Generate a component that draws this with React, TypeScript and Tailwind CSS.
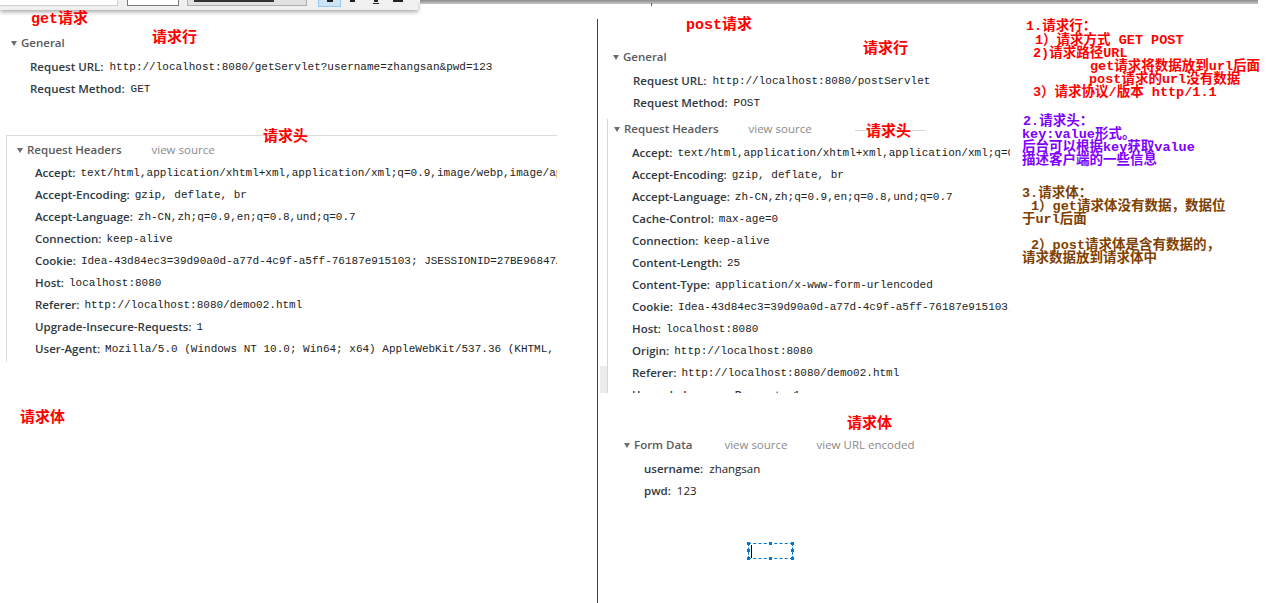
import React from 'react';

const sans = "font-['Open_Sans','Noto_Sans',sans-serif]";
const mono = "font-['Liberation_Mono','DejaVu_Sans_Mono',monospace]";
const cjk = "font-['Liberation_Mono','Noto_Sans_CJK_SC',monospace]";

function Caret() {
  return (
    <svg width="6" height="5" viewBox="0 0 6 5" className="shrink-0">
      <polygon points="0,0 6,0 3,5" fill="#6e6e6e" />
    </svg>
  );
}

function Header({ title, pl, links = [] }: { title: string; pl: string; links?: { text: string; ml: string }[] }) {
  return (
    <div className={`h-[20px] flex items-center gap-[4px] whitespace-nowrap ${pl}`}>
      <Caret />
      <span className="text-[11.5px] font-semibold text-[#5a5a5a]">{title}</span>
      {links.map((l) => (
        <span key={l.text} className={`text-[11.5px] text-[#8a8a8a] ${l.ml}`}>{l.text}</span>
      ))}
    </div>
  );
}

function Row({ k, v, gap = 'ml-[5px]', plain = false }: { k: string; v: string; gap?: string; plain?: boolean }) {
  return (
    <div className="h-[22px] flex items-center whitespace-nowrap">
      <span className="text-[11.5px] font-semibold text-[#303942]">{k}:</span>
      <span className={`${gap} ${plain ? 'text-[11.5px]' : `${mono} text-[11px]`} text-[#222]`}>{v}</span>
    </div>
  );
}

const leftHeaders: [string, string][] = [
  ['Accept', 'text/html,application/xhtml+xml,application/xml;q=0.9,image/webp,image/apng,*/*;q=0.8'],
  ['Accept-Encoding', 'gzip, deflate, br'],
  ['Accept-Language', 'zh-CN,zh;q=0.9,en;q=0.8,und;q=0.7'],
  ['Connection', 'keep-alive'],
  ['Cookie', 'Idea-43d84ec3=39d90a0d-a77d-4c9f-a5ff-76187e915103; JSESSIONID=27BE96847A1C'],
  ['Host', 'localhost:8080'],
  ['Referer', 'http://localhost:8080/demo02.html'],
  ['Upgrade-Insecure-Requests', '1'],
  ['User-Agent', 'Mozilla/5.0 (Windows NT 10.0; Win64; x64) AppleWebKit/537.36 (KHTML, like Gecko)'],
];

const rightHeaders: [string, string][] = [
  ['Accept', 'text/html,application/xhtml+xml,application/xml;q=0.9,image/webp'],
  ['Accept-Encoding', 'gzip, deflate, br'],
  ['Accept-Language', 'zh-CN,zh;q=0.9,en;q=0.8,und;q=0.7'],
  ['Cache-Control', 'max-age=0'],
  ['Connection', 'keep-alive'],
  ['Content-Length', '25'],
  ['Content-Type', 'application/x-www-form-urlencoded'],
  ['Cookie', 'Idea-43d84ec3=39d90a0d-a77d-4c9f-a5ff-76187e915103; JSESSIONID'],
  ['Host', 'localhost:8080'],
  ['Origin', 'http://localhost:8080'],
  ['Referer', 'http://localhost:8080/demo02.html'],
  ['Upgrade-Insecure-Requests', '1'],
];

function Note({ text, cls }: { text: string; cls: string }) {
  return (
    <div className={`absolute ${cjk} font-bold text-[15px] leading-[16px] text-[#ff0000] whitespace-nowrap ${cls}`}>{text}</div>
  );
}

function Line({ text, cls = '', h }: { text: string; cls?: string; h: string }) {
  return <div className={`${h} flex items-center whitespace-pre ${cls}`}>{text}</div>;
}

function Handle({ cls }: { cls: string }) {
  return <div className={`absolute w-[3px] h-[3px] bg-[#0078d7] ${cls}`} />;
}

export default function App() {
  return (
    <div className={`relative w-[1267px] h-[603px] bg-white overflow-hidden flex ${sans}`}>
      {/* left: GET request */}
      <div className="w-[597px] shrink-0 pt-[33px]">
        <Header title="General" pl="pl-[11px]" />
        <div className="pl-[30px] mt-[3px]">
          <Row k="Request URL" v="http://localhost:8080/getServlet?username=zhangsan&pwd=123" gap="ml-[6px]" />
          <Row k="Request Method" v="GET" gap="ml-[6px]" />
        </div>
        <div className="mt-[35px] ml-[6px] w-[551px] h-[227px] border-t border-l border-[#dcdcdc] overflow-hidden">
          <div className="pt-[4px]">
            <Header title="Request Headers" pl="pl-[10px]" links={[{ text: 'view source', ml: 'ml-[26px]' }]} />
          </div>
          <div className="pl-[28px] mt-[2px]">
            {leftHeaders.map(([k, v]) => (
              <Row key={k} k={k} v={v} />
            ))}
          </div>
        </div>
      </div>

      <div className="w-px shrink-0 mt-[19px] bg-[#d40000]" />

      {/* right: POST request */}
      <div className="w-[412px] shrink-0 pt-[47px] overflow-hidden">
        <Header title="General" pl="pl-[15px]" />
        <div className="pl-[35px] mt-[3px]">
          <Row k="Request URL" v="http://localhost:8080/postServlet" gap="ml-[6px]" />
          <Row k="Request Method" v="POST" gap="ml-[6px]" />
        </div>
        <div className="mt-[5px] ml-[2px] flex h-[274px]">
          <div className="w-[7px] flex flex-col justify-end">
            <div className="h-[27px] bg-[#ececec]" />
          </div>
          <div className="flex-1 border-l border-[#d6d6d6] overflow-hidden">
            <Header title="Request Headers" pl="pl-[6px]" links={[{ text: 'view source', ml: 'ml-[26px]' }]} />
            <div className="pl-[24px] mt-[3px]">
              {rightHeaders.map(([k, v]) => (
                <Row key={k} k={k} v={v} />
              ))}
            </div>
          </div>
        </div>
        <div className="mt-[42px]">
          <Header
            title="Form Data"
            pl="pl-[26px]"
            links={[
              { text: 'view source', ml: 'ml-[28px]' },
              { text: 'view URL encoded', ml: 'ml-[25px]' },
            ]}
          />
          <div className="pl-[46px] mt-[3px]">
            <Row k="username" v="zhangsan" gap="ml-[6px]" plain />
            <Row k="pwd" v="123" gap="ml-[6px]" plain />
          </div>
        </div>
      </div>

      {/* top strip of another window */}
      <div className="absolute left-[420px] top-0 w-[838px] h-[4px] bg-gradient-to-b from-[#8c8c8c] to-[#c8c8c8]" />
      <div className="absolute left-0 top-0 w-[418px] h-[10px] bg-[#f0f0f0] shadow-[0_2px_4px_rgba(0,0,0,0.35)] flex items-start">
        <div className="w-[118px] h-[6px] bg-white border-r border-b border-[#d0d0d0]" />
        <div className="ml-[9px] w-[52px] h-[6px] bg-white border border-t-0 border-[#7a7a7a]" />
        <div className="ml-[8px] w-[120px] h-[6px] bg-[#e1e1e1] border border-t-0 border-[#adadad] pl-[6px]">
          <div className="w-[80px] h-[2px] bg-[#333]" />
        </div>
        <div className="ml-[11px] w-[23px] h-[7px] bg-[#cce4f7] border border-t-0 border-[#99c9ef] flex justify-center">
          <div className="w-[6px] h-[2px] bg-[#222]" />
        </div>
        <div className="ml-[9px] w-[5px] h-[2px] bg-[#222]" />
        <div className="ml-[18px] w-[6px] h-[4px] border-b border-[#222] flex justify-center"><div className="w-[4px] h-[2px] bg-[#222]" /></div>
        <div className="ml-[14px] w-[10px] h-[2px] bg-[#222]" />
      </div>
      <div className="absolute left-[651px] top-[3px] w-px h-[3px] bg-[#1a6fd0]" />

      {/* red annotations */}
      <Note text="get请求" cls="left-[31px] top-[12px]" />
      <Note text="请求行" cls="left-[152px] top-[31px]" />
      <Note text="请求头" cls="left-[263px] top-[130px]" />
      <Note text="请求体" cls="left-[20px] top-[411px]" />
      <Note text="post请求" cls="left-[686px] top-[18px]" />
      <Note text="请求行" cls="left-[863px] top-[42px]" />
      <div className="absolute left-[855px] top-[130px] w-[70px] h-px bg-[#d6d6d6]" />
      <Note text="请求头" cls="left-[866px] top-[125px]" />
      <Note text="请求体" cls="left-[847px] top-[417px]" />

      {/* selection box */}
      <div className="absolute left-[748px] top-[543px] w-[45px] h-[16px] border border-dashed border-[#0078d7]">
        <div className="absolute left-[2px] top-[1px] w-px h-[13px] bg-black" />
        <Handle cls="-left-[2px] -top-[2px]" />
        <Handle cls="left-[20px] -top-[2px]" />
        <Handle cls="-right-[2px] -top-[2px]" />
        <Handle cls="-left-[2px] top-[5px]" />
        <Handle cls="-right-[2px] top-[5px]" />
        <Handle cls="-left-[2px] -bottom-[2px]" />
        <Handle cls="left-[20px] -bottom-[2px]" />
        <Handle cls="-right-[2px] -bottom-[2px]" />
      </div>

      {/* notes column */}
      <div className={`absolute left-[1022px] top-[21px] ${cjk} font-bold text-[13.5px] text-[#ff0000]`}>
        <Line h="h-[13.2px]" cls="pl-[4px]" text="1.请求行：" />
        <Line h="h-[13.2px]" cls="pl-[13px]" text="1）请求方式 GET POST" />
        <Line h="h-[13.2px]" cls="pl-[11px]" text="2)请求路径URL" />
        <Line h="h-[13.2px]" cls="pl-[68px]" text="get请求将数据放到url后面" />
        <Line h="h-[13.2px]" cls="pl-[67px]" text="post请求的url没有数据" />
        <Line h="h-[13.2px]" cls="pl-[11px]" text="3）请求协议/版本 http/1.1" />
      </div>
      <div className={`absolute left-[1022px] top-[116px] ${cjk} font-bold text-[13.5px] text-[#8000ff]`}>
        <Line h="h-[12.8px]" cls="pl-[1px]" text="2.请求头：" />
        <Line h="h-[12.8px]" text="key:value形式。" />
        <Line h="h-[12.8px]" text="后台可以根据key获取value" />
        <Line h="h-[12.8px]" text="描述客户端的一些信息" />
      </div>
      <div className={`absolute left-[1022px] top-[188px] ${cjk} font-bold text-[13.5px] text-[#804000]`}>
        <Line h="h-[13px]" text="3.请求体：" />
        <Line h="h-[13px]" cls="pl-[9px]" text="1）get请求体没有数据，数据位" />
        <Line h="h-[13px]" text="于url后面" />
        <Line h="h-[13px]" text=" " />
        <Line h="h-[13px]" cls="pl-[9px]" text="2）post请求体是含有数据的，" />
        <Line h="h-[13px]" text="请求数据放到请求体中" />
      </div>
    </div>
  );
}
